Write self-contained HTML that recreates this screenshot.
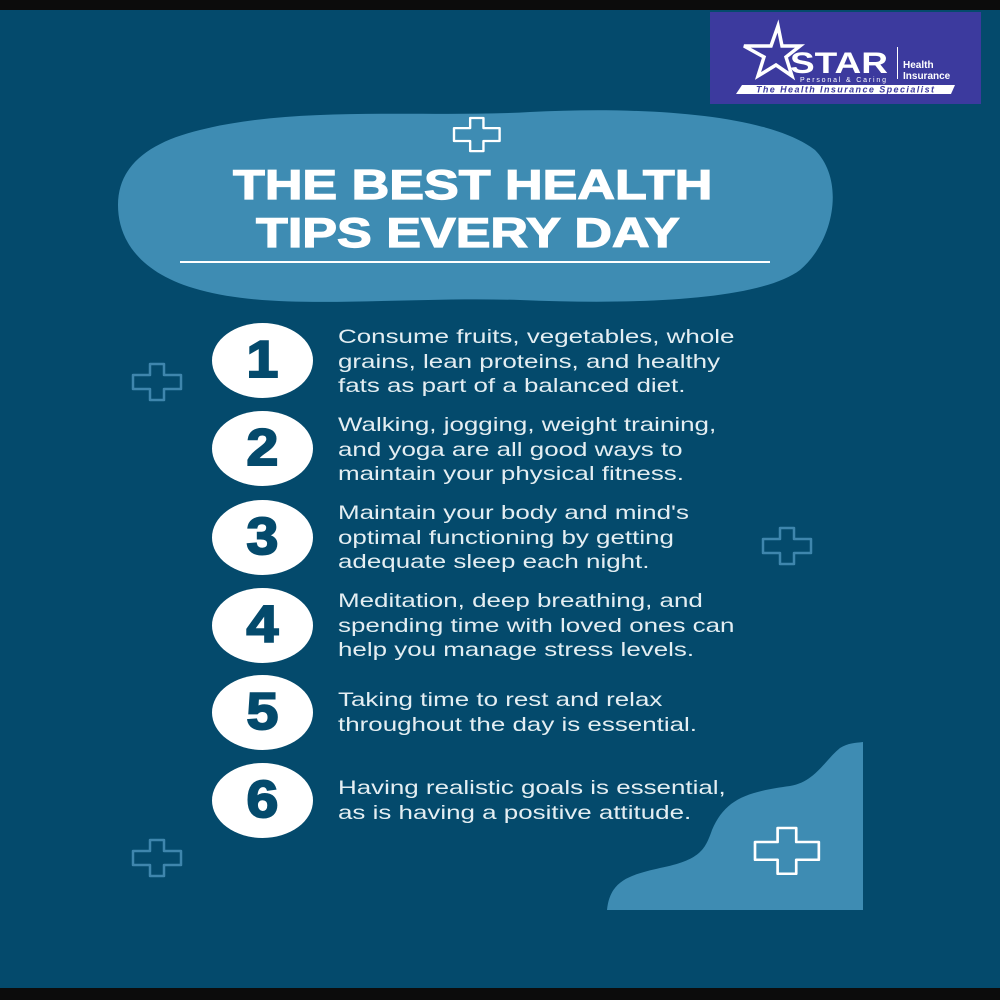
<!DOCTYPE html>
<html><head><meta charset="utf-8"><style>
html,body{margin:0;padding:0}
body{width:1000px;height:1000px;position:relative;overflow:hidden;background:#044a6c;font-family:"Liberation Sans",sans-serif}
.band{position:absolute;left:0;width:1000px;background:#0c0c0c}
.t{position:absolute;color:#fff;font-weight:bold;font-size:42px;white-space:nowrap;transform-origin:0 0;line-height:1;-webkit-text-stroke:1.2px #fff}
.tip{position:absolute;left:338px;color:#e4eef2;font-size:19.5px;line-height:24.5px;white-space:nowrap;transform:scaleX(1.33);transform-origin:0 0}
.n{position:absolute;width:101px;height:75px;border-radius:50%;background:#fff;color:#044a6c;font-weight:bold;font-size:52px;text-align:center;line-height:75px;left:212px}
.n span{display:inline-block;transform:scaleX(1.1);-webkit-text-stroke:2px #044a6c}
</style></head><body>
<div class="band" style="top:0;height:10px"></div>
<div class="band" style="top:988px;height:12px"></div>
<svg width="1000" height="1000" style="position:absolute;left:0;top:0">
<defs><path id="pl" d="M17,0 H31 V11 H48 V25 H31 V36 H17 V25 H0 V11 H17 Z" stroke-linejoin="round"/></defs>
<path d="M200,130 C300,105 430,118 530,112 C650,106 770,115 815,150 C845,180 835,240 800,270 C760,300 640,305 520,300 C400,296 280,312 200,290 C140,274 118,240 118,205 C118,165 150,142 200,130 Z" fill="#3e8cb3"/>
<rect x="180" y="261" width="590" height="2" fill="#fff"/>
<use href="#pl" transform="translate(454,118) scale(0.95,0.92)" fill="none" stroke="#fff" stroke-width="2.5"/>
<use href="#pl" transform="translate(133,364)" fill="none" stroke="#3f86ad" stroke-width="2.5"/>
<use href="#pl" transform="translate(763,528)" fill="none" stroke="#3f86ad" stroke-width="2.5"/>
<use href="#pl" transform="translate(133,840)" fill="none" stroke="#3f86ad" stroke-width="2.5"/>
<path d="M607,910 C610,880 630,875 660,868 C700,860 705,850 712,830 C725,800 745,792 790,786 C815,782 825,760 840,748 C848,743 855,743 863,742 V910 Z" fill="#3e8cb3"/>
<use href="#pl" transform="translate(755,828) scale(1.33,1.27)" fill="none" stroke="#fff" stroke-width="2"/>
<rect x="710" y="12" width="271" height="92" fill="#3c3a9e"/>
<path d="M778,26 L782,46 L800,46 L786,57 L792,76 L776,65 L758,76 L764,57 L744,46 L771,46 Z" fill="none" stroke="#fff" stroke-width="3.5"/>
<text x="790" y="73" fill="#fff" font-family="Liberation Sans" font-weight="bold" font-size="30" textLength="98" lengthAdjust="spacingAndGlyphs">STAR</text>
<text x="800" y="82" fill="#fff" font-family="Liberation Sans" font-size="7" textLength="86">Personal &amp; Caring</text>
<rect x="897" y="47" width="1" height="32" fill="#fff"/>
<text x="903" y="68" fill="#fff" font-family="Liberation Sans" font-weight="bold" font-size="10">Health</text>
<text x="903" y="79" fill="#fff" font-family="Liberation Sans" font-weight="bold" font-size="10">Insurance</text>
<path d="M742,85 H955 L951,94 H736 Z" fill="#fff"/>
<text x="756" y="92.5" fill="#3c3a9e" font-family="Liberation Sans" font-weight="bold" font-style="italic" font-size="9" textLength="178">The Health Insurance Specialist</text>
</svg>
<div class="t" style="left:233px;top:164px;transform:scaleX(1.24)">THE BEST HEALTH</div>
<div class="t" style="left:256px;top:212px;transform:scaleX(1.24)">TIPS EVERY DAY</div>

<div class="n" style="top:323px"><span>1</span></div>
<div class="n" style="top:411px"><span>2</span></div>
<div class="n" style="top:500px"><span>3</span></div>
<div class="n" style="top:588px"><span>4</span></div>
<div class="n" style="top:675px"><span>5</span></div>
<div class="n" style="top:763px"><span>6</span></div>

<div class="tip" style="top:325px">Consume fruits, vegetables, whole<br>grains, lean proteins, and healthy<br>fats as part of a balanced diet.</div>
<div class="tip" style="top:413px">Walking, jogging, weight training,<br>and yoga are all good ways to<br>maintain your physical fitness.</div>
<div class="tip" style="top:501px">Maintain your body and mind's<br>optimal functioning by getting<br>adequate sleep each night.</div>
<div class="tip" style="top:589px">Meditation, deep breathing, and<br>spending time with loved ones can<br>help you manage stress levels.</div>
<div class="tip" style="top:688px">Taking time to rest and relax<br>throughout the day is essential.</div>
<div class="tip" style="top:776px">Having realistic goals is essential,<br>as is having a positive attitude.</div>
</body></html>
